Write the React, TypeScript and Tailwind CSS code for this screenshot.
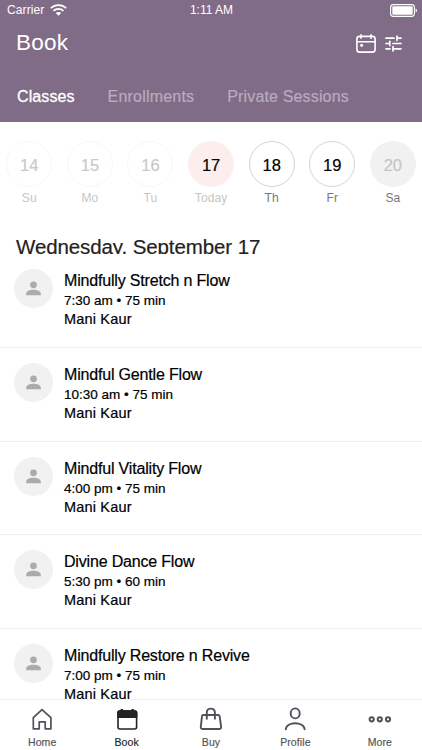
const days = [
  { num: '14', label: 'Su', circle: 'border border-[#f7f7f7] text-[#c9c9c9]', text: 'text-[#c6c6c6]' },
  { num: '15', label: 'Mo', circle: 'border border-[#f7f7f7] text-[#c9c9c9]', text: 'text-[#c6c6c6]' },
  { num: '16', label: 'Tu', circle: 'border border-[#f7f7f7] text-[#c9c9c9]', text: 'text-[#c6c6c6]' },
  { num: '17', label: 'Today', circle: 'bg-[#fdeeee] text-black', text: 'text-[#c6c6c6]' },
  { num: '18', label: 'Th', circle: 'border border-[#d4d4d4] text-black', text: 'text-[#777777]' },
  { num: '19', label: 'Fr', circle: 'border border-[#d4d4d4] text-black', text: 'text-[#777777]' },
  { num: '20', label: 'Sa', circle: 'bg-[#f1f1f1] text-[#c6c6c6]', text: 'text-[#777777]' },
];

const classes = [
  { title: 'Mindfully Stretch n Flow', time: '7:30 am • 75 min' },
  { title: 'Mindful Gentle Flow', time: '10:30 am • 75 min' },
  { title: 'Mindful Vitality Flow', time: '4:00 pm • 75 min' },
  { title: 'Divine Dance Flow', time: '5:30 pm • 60 min' },
  { title: 'Mindfully Restore n Revive', time: '7:00 pm • 75 min' },
];

function Wifi() {
  return (
    <svg width="17" height="12" viewBox="0 0 17 12" fill="none" stroke="white" strokeWidth="1.8">
      <path d="M0.8 4.2C5.1 0 11.9 0 16.2 4.2" />
      <path d="M3.5 6.9C6.4 4.2 10.6 4.2 13.5 6.9" />
      <path d="M8.5 11.8L5.8 9.1C7.4 7.7 9.6 7.7 11.2 9.1Z" fill="white" stroke="none" />
    </svg>
  );
}

function Battery() {
  return (
    <svg width="28" height="13" viewBox="0 0 28 13" fill="white">
      <rect x="0.6" y="0.6" width="23.8" height="11.8" rx="2.8" fill="none" stroke="white" strokeWidth="1.1" />
      <rect x="2.3" y="2.3" width="20.4" height="8.4" rx="1.2" />
      <path d="M25.6 4.3C27.4 5 27.4 8 25.6 8.7Z" />
    </svg>
  );
}

function CalendarIcon() {
  return (
    <svg width="20" height="19" viewBox="0 0 20 19" fill="none" stroke="white" strokeWidth="1.6" strokeLinecap="round">
      <rect x="0.9" y="2.4" width="18.2" height="15.7" rx="2.6" />
      <path d="M1 7.7H19M5 0.9V4.3M15 0.9V4.3" />
      <rect x="4.2" y="10" width="2.8" height="2.8" rx="1" fill="white" stroke="none" />
    </svg>
  );
}

function TuneIcon() {
  return (
    <svg width="17" height="17" viewBox="0 0 17 17" fill="none" stroke="white" strokeWidth="1.7" strokeLinecap="round">
      <path d="M1 3.2H9M12 3.2H16M12 1.1V5.3M1 8.5H4.8M4.8 6.4V10.6M8 8.5H16M1 13.8H5M8 13.8H16M8 11.7V15.9" />
    </svg>
  );
}

function Avatar() {
  return (
    <div className="flex h-[39px] w-[39px] shrink-0 items-center justify-center rounded-full bg-[#f1f1f1]">
      <svg width="15" height="15" viewBox="0 0 16 16" fill="#ababab">
        <circle cx="8" cy="4.1" r="3.6" />
        <path d="M0.2 15.2V13.4C0.2 10.6 4.1 9.3 8 9.3S15.8 10.6 15.8 13.4V15.2Z" />
      </svg>
    </div>
  );
}

function HomeIcon() {
  return (
    <svg width="24" height="24" viewBox="0 0 24 24" fill="none" stroke="#50525a" strokeWidth="1.7" strokeLinejoin="round">
      <path d="M3.3 10.6L12 2.6L20.9 10.6V21.8H15.2V14.8H9.2V21.8H3.3Z" />
    </svg>
  );
}

function BookIcon() {
  return (
    <svg width="24" height="24" viewBox="0 0 24 24" fill="none" stroke="#232326" strokeWidth="1.6">
      <rect x="3" y="4" width="18.6" height="18" rx="2" />
      <path d="M2.2 11V5.5Q2.2 3.2 4.5 3.2H5.6V1.9H8V3.2H16.4V1.9H18.8V3.2H20.1Q22.4 3.2 22.4 5.5V11Z" fill="#232326" stroke="none" />
    </svg>
  );
}

function BuyIcon() {
  return (
    <svg width="24" height="24" viewBox="0 0 24 24" fill="none" stroke="#50525a" strokeWidth="1.9" strokeLinejoin="round" strokeLinecap="round">
      <path d="M4.2 8H19.2Q20.4 8 20.6 9.2L22.1 19.6Q22.3 22 20.2 22H3.7Q1.6 22 1.8 19.6L3 9.2Q3.1 8 4.2 8Z" />
      <path d="M7.8 11.8V5.5C7.8 0.3 15.9 0.3 15.9 5.5V11.8" />
    </svg>
  );
}

function ProfileIcon() {
  return (
    <svg width="24" height="24" viewBox="0 0 24 24" fill="none" stroke="#50525a" strokeWidth="1.9" strokeLinecap="round">
      <ellipse cx="12.2" cy="6.4" rx="4.5" ry="5" />
      <path d="M2.8 22.3C3.3 14.3 21.1 14.3 21.6 22.3" />
    </svg>
  );
}

function MoreIcon() {
  return (
    <svg width="24" height="24" viewBox="0 0 24 24" fill="none" stroke="#50525a" strokeWidth="2">
      <circle cx="3.7" cy="12.3" r="2.1" />
      <circle cx="11.8" cy="12.3" r="2.1" />
      <circle cx="20" cy="12.3" r="2.1" />
    </svg>
  );
}

const tabs = [
  { label: 'Home', Icon: HomeIcon, color: 'text-[#505258]' },
  { label: 'Book', Icon: BookIcon, color: 'text-[#232326]' },
  { label: 'Buy', Icon: BuyIcon, color: 'text-[#505258]' },
  { label: 'Profile', Icon: ProfileIcon, color: 'text-[#505258]' },
  { label: 'More', Icon: MoreIcon, color: 'text-[#505258]' },
];

export default function App() {
  return (
    <div className="flex h-[750px] w-[422px] flex-col overflow-hidden bg-white font-['Liberation_Sans',Arial,sans-serif]">
      <header className="h-[122px] shrink-0 bg-[#806c87] text-white">
        <div className="grid h-5 grid-cols-3 items-center pr-[4px] pl-[7px] text-[12px] leading-5">
          <div className="flex items-center gap-[6px]">
            <span className="tracking-[0.1px]">Carrier</span>
            <Wifi />
          </div>
          <span className="pr-[2px] text-center">1:11 AM</span>
          <div className="flex justify-end">
            <Battery />
          </div>
        </div>
        <div className="flex h-[46px] items-center justify-between pr-[20px] pl-[16px]">
          <h1 className="text-[22.5px] leading-[46px] tracking-[0.2px]">Book</h1>
          <div className="flex items-center gap-[9px]">
            <CalendarIcon />
            <TuneIcon />
          </div>
        </div>
        <nav className="flex h-[56px] items-center gap-[33px] pt-[5px] pl-[17px] text-[16px]">
          <span className="tracking-[0.1px] [-webkit-text-stroke:0.3px_white]">Classes</span>
          <span className="tracking-[0.2px] text-[#b9abbf] [-webkit-text-stroke:0.2px_#b9abbf]">Enrollments</span>
          <span className="tracking-[0.15px] text-[#b9abbf] [-webkit-text-stroke:0.2px_#b9abbf]">Private Sessions</span>
        </nav>
      </header>

      <div className="flex h-[112px] shrink-0 pt-[19px] pr-px">
        {days.map((d) => (
          <div key={d.num} className="flex w-[60.6px] shrink-0 flex-col items-center first:ml-[-1px]">
            <div className={`flex h-[46px] w-[46px] items-center justify-center rounded-full pt-[2px] text-[16.5px] [-webkit-text-stroke:0.2px_currentColor] ${d.circle}`}>
              {d.num}
            </div>
            <span className={`mt-[3px] text-[12px] leading-[16px] tracking-[0.1px] ${d.text}`}>{d.label}</span>
          </div>
        ))}
      </div>

      <h2 className="h-[20px] shrink-0 overflow-hidden pl-[16px] text-[20.5px] leading-[25px] tracking-[-0.1px] whitespace-nowrap text-[#222222] [-webkit-text-stroke:0.2px_currentColor]">
        Wednesday, September 17
      </h2>

      <main className="min-h-0 flex-1 overflow-hidden">
        {classes.map((c) => (
          <div key={c.title} className="flex h-[93.75px] gap-[11px] border-b border-[#f1f1f1] pt-[15px] pl-[14px] text-black [-webkit-text-stroke:0.2px_currentColor]">
            <Avatar />
            <div>
              <div className="h-[22px] text-[16px] leading-[24px] tracking-[-0.18px]">{c.title}</div>
              <div className="h-[19px] text-[13.5px] leading-[20px]">{c.time}</div>
              <div className="h-[19px] text-[14.5px] leading-[19px] tracking-[0.18px]">Mani Kaur</div>
            </div>
          </div>
        ))}
      </main>

      <footer className="grid h-[51px] shrink-0 grid-cols-5 border-t border-[#f1f1f1] bg-white">
        {tabs.map(({ label, Icon, color }) => (
          <div key={label} className={`flex flex-col items-center pt-[7px] ${color}`}>
            <Icon />
            <span className="mt-[4px] text-[10.5px] leading-[14px] tracking-[0.1px] [-webkit-text-stroke:0.15px_currentColor]">{label}</span>
          </div>
        ))}
      </footer>
    </div>
  );
}
